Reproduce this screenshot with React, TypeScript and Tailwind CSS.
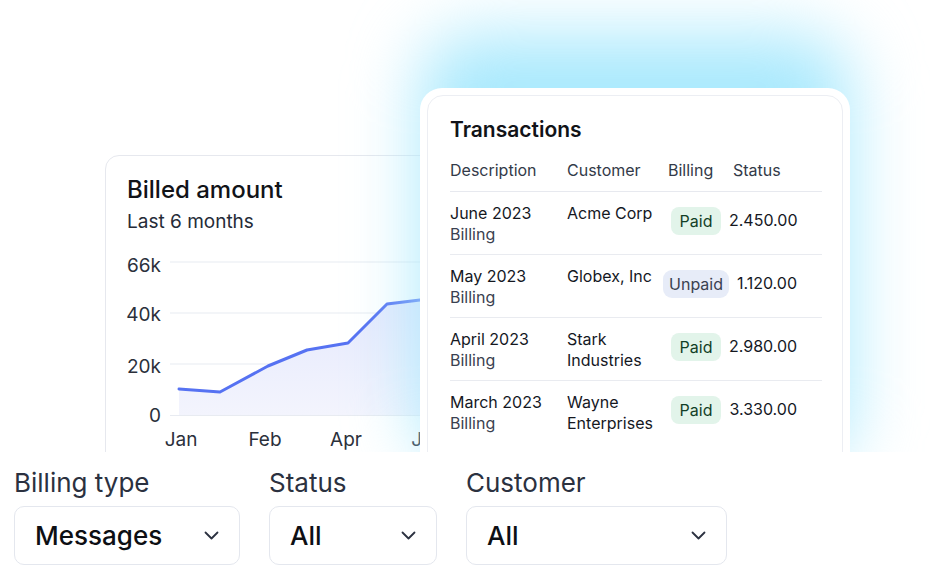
const rows = [
  { date: 'June 2023', customer: ['Acme Corp'], paid: true, amount: '2.450.00' },
  { date: 'May 2023', customer: ['Globex, Inc'], paid: false, amount: '1.120.00' },
  { date: 'April 2023', customer: ['Stark', 'Industries'], paid: true, amount: '2.980.00' },
  { date: 'March 2023', customer: ['Wayne', 'Enterprises'], paid: true, amount: '3.330.00' },
];

const filters = [
  { label: 'Billing type', value: 'Messages', width: 'w-[226px]' },
  { label: 'Status', value: 'All', width: 'w-[168px]' },
  { label: 'Customer', value: 'All', width: 'w-[261px]' },
];

const points = '74,145 115,148 163,122 202,106 243,99 282,60 315,56 356,52 400,48';

const Chevron = () => (
  <svg width="15" height="9" viewBox="0 0 15 9" fill="none" stroke="#2b3140">
    <path strokeLinecap="round" strokeLinejoin="round" strokeWidth={1.8} d="M1.5 1.5l6 6 6-6" />
  </svg>
);

const BilledCard = () => (
  <div className="absolute left-[105px] top-[155px] w-[400px] h-[340px] bg-white border border-[#e6e8ee] rounded-[14px]">
    <div className="pl-[21px] pt-[19px]">
      <p className="text-[24px] leading-[30px] font-medium text-[#111318]">Billed amount</p>
      <p className="text-[19px] leading-[24px] mt-[5px] text-[#252b37]">Last 6 months</p>
    </div>
    <svg width="400" height="220" className="mt-[10px] -ml-px" style={{ fontFamily: 'Inter, sans-serif' }}>
      <defs>
        <linearGradient id="fill" x1="0" y1="0" x2="0" y2="1">
          <stop offset="0%" stopColor="#e4e8fd" />
          <stop offset="100%" stopColor="#f3f4fd" />
        </linearGradient>
      </defs>
      {[18, 69, 120, 171.5].map((y) => (
        <line key={y} x1="65" x2="400" y1={y} y2={y} stroke="#e8ebf1" strokeWidth="1.2" />
      ))}
      <polygon points={`74,171 ${points} 400,171`} fill="url(#fill)" />
      <polyline points={points} fill="none" stroke="#5672f2" strokeWidth="3" strokeLinejoin="round" strokeLinecap="round" />
      <g fill="#2b303b" fontSize="19">
        <text x="56" y="28" textAnchor="end">66k</text>
        <text x="56" y="77" textAnchor="end">40k</text>
        <text x="56" y="129" textAnchor="end">20k</text>
        <text x="56" y="178" textAnchor="end">0</text>
        <text x="76" y="202" textAnchor="middle">Jan</text>
        <text x="160" y="202" textAnchor="middle">Feb</text>
        <text x="241" y="202" textAnchor="middle">Apr</text>
        <text x="323" y="202" textAnchor="middle">Jun</text>
      </g>
    </svg>
  </div>
);

const Badge = ({ paid }: { paid: boolean }) =>
  paid ? (
    <span className="inline-block h-[28px] px-[9px] leading-[28px] rounded-[8px] bg-[#e2f4ea] text-[#123f27] text-[16px]">Paid</span>
  ) : (
    <span className="inline-block h-[28px] px-[6px] leading-[28px] rounded-[9px] bg-[#e7ecf8] text-[#3a4150] text-[16px]">Unpaid</span>
  );

const TransactionsCard = () => (
  <>
    <div className="absolute left-[420px] top-[35px] w-[430px] h-[430px] rounded-[50px] bg-[#a9e9fd] blur-[34px]" />
    <div className="absolute left-[420px] top-[88px] w-[430px] h-[400px] bg-white rounded-[22px] p-[7px]">
      <div className="h-full border border-[#eceef3] rounded-[16px] pl-[22px] pr-[20px] pt-[20px]">
        <p className="text-[21px] leading-[28px] font-semibold text-[#111318]">Transactions</p>
        <div className="flex mt-[14px] h-[34px] text-[16px] leading-[24px] text-[#333a48] border-b border-[#e7e9ef]">
          <span className="w-[117px]">Description</span>
          <span className="w-[101px]">Customer</span>
          <span className="w-[65px]">Billing</span>
          <span>Status</span>
        </div>
        {rows.map((r, i) => (
          <div
            key={r.date}
            className={`flex h-[63px] pt-[11px] text-[16px] leading-[21px] ${i < rows.length - 1 ? 'border-b border-[#e9ebf0]' : ''}`}
          >
            <div className="w-[117px]">
              <p className="text-[#15181f]">{r.date}</p>
              <p className="text-[#3a4150]">Billing</p>
            </div>
            <div className="w-[96px] text-[#15181f]">
              {r.customer.map((c) => (
                <p key={c}>{c}</p>
              ))}
            </div>
            <div className="w-[66px] flex justify-center items-start pt-[4px]">
              <Badge paid={r.paid} />
            </div>
            <div className="w-[68px] text-right pt-[7px] text-[#15181f] whitespace-nowrap">{r.amount}</div>
          </div>
        ))}
      </div>
    </div>
  </>
);

export default function App() {
  return (
    <div className="w-[930px] h-[582px] bg-white overflow-hidden" style={{ fontFamily: 'Inter, sans-serif' }}>
      <div className="relative h-[452px] overflow-hidden">
        <BilledCard />
        <TransactionsCard />
      </div>
      <div className="flex pl-[14px] pt-[16px]">
        {filters.map((f) => (
          <div key={f.label} className="mr-[29px]">
            <p className="text-[26px] leading-[30px] text-[#2b3140]">{f.label}</p>
            <div className={`${f.width} h-[59px] mt-[8px] border border-[#e4e7ee] rounded-[10px] flex items-center justify-between pl-[20px] pr-[20px]`}>
              <span className="text-[26px] font-medium text-[#0d0f14]">{f.value}</span>
              <Chevron />
            </div>
          </div>
        ))}
      </div>
    </div>
  );
}
